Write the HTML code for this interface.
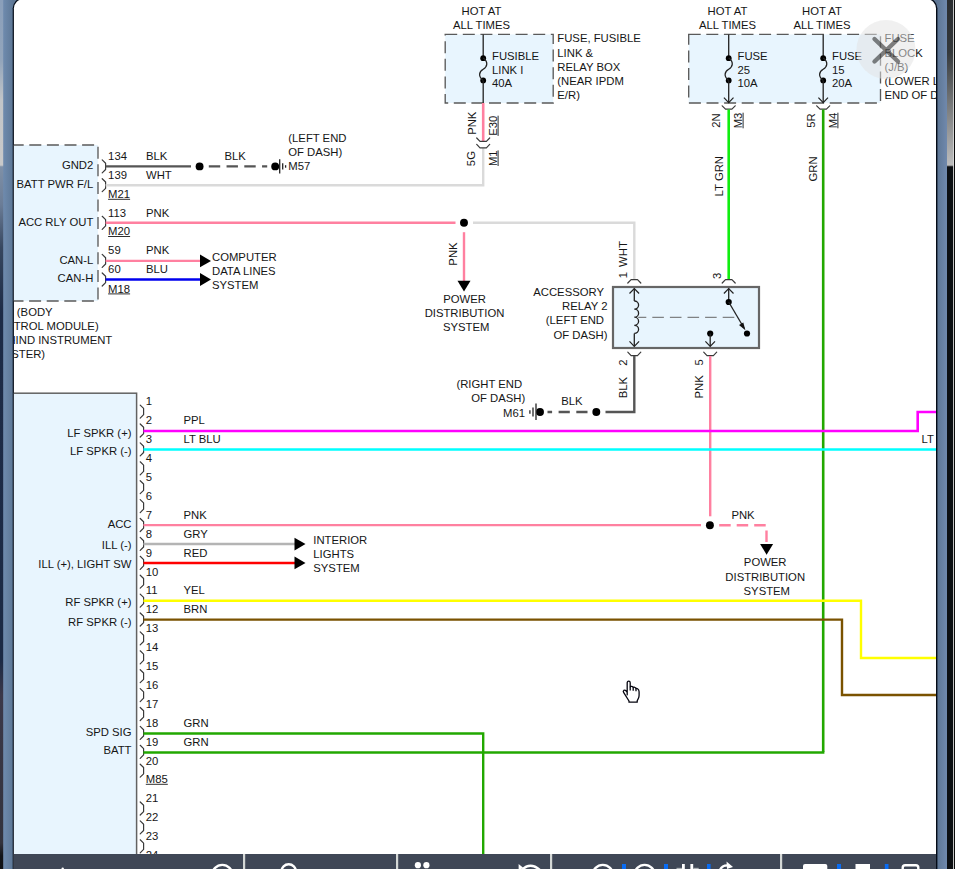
<!DOCTYPE html>
<html><head><meta charset="utf-8"><title>Wiring diagram</title>
<style>
html,body{margin:0;padding:0;background:#fff;}
body{width:955px;height:869px;overflow:hidden;position:relative;font-family:"Liberation Sans",sans-serif;}
svg{position:absolute;left:0;top:0;display:block;}
svg text{font-family:"Liberation Sans",sans-serif;}
svg text.u{text-decoration:underline;text-decoration-thickness:0.9px;text-underline-offset:0.6px;}
</style></head><body>
<svg width="955" height="869" viewBox="0 0 955 869">
<defs>
<linearGradient id="lg" x1="0" x2="1" y1="0" y2="0"><stop offset="0" stop-color="#6f8bae"/><stop offset="1" stop-color="#5c7694"/></linearGradient><linearGradient id="rg" x1="0" x2="1" y1="0" y2="0"><stop offset="0" stop-color="#5b7492"/><stop offset="1" stop-color="#7089ad"/></linearGradient>
<linearGradient id="ls" x1="0" x2="0" y1="0" y2="1"><stop offset="0" stop-color="#8a9fba"/><stop offset="0.07" stop-color="#93a5bb"/><stop offset="0.115" stop-color="#c2c5c8"/><stop offset="0.19" stop-color="#c9c9c9"/><stop offset="0.192" stop-color="#7f90a7"/><stop offset="0.235" stop-color="#6b7d97"/><stop offset="0.285" stop-color="#37475f"/><stop offset="0.36" stop-color="#1d2b46"/><stop offset="0.76" stop-color="#1c2a45"/><stop offset="0.8" stop-color="#3b3849"/><stop offset="0.97" stop-color="#33333d"/><stop offset="0.985" stop-color="#121418"/><stop offset="1" stop-color="#101216"/></linearGradient>
<linearGradient id="rs" x1="0" x2="0" y1="0" y2="1"><stop offset="0" stop-color="#2a2d30"/><stop offset="0.06" stop-color="#34383b"/><stop offset="0.12" stop-color="#77797a"/><stop offset="0.19" stop-color="#bdbdbd"/><stop offset="0.192" stop-color="#0c0f12"/><stop offset="1" stop-color="#0c0f12"/></linearGradient>
<clipPath id="cp"><rect x="13.9" y="-0.7" width="922.1" height="900" rx="9" ry="9"/></clipPath>
</defs>
<!-- backdrop strips -->
<rect x="0" y="0" width="955" height="869" fill="#5f7896"/>
<rect x="3" y="0" width="11" height="869" fill="url(#lg)"/>
<rect x="0" y="0" width="3.2" height="869" fill="url(#ls)"/>
<rect x="936" y="0" width="11.2" height="869" fill="url(#rg)"/>
<rect x="947" y="0" width="8" height="869" fill="url(#rs)"/>
<rect x="953" y="0" width="0.9" height="869" fill="#f2f2f2"/>
<rect x="953.9" y="0" width="1.1" height="869" fill="#0a0a0a"/>
<!-- modal sheet -->
<rect x="12.7" y="-1.8" width="924.7" height="900" rx="10" ry="10" fill="#030a16"/>
<rect x="13.9" y="-0.7" width="922.1" height="900" rx="9" ry="9" fill="#fff"/>
<g clip-path="url(#cp)">
<rect x="0" y="145" width="98" height="156" fill="#e8f5fe"/>
<path d="M0,145 H98 V301 H0" stroke="#5a5a5a" stroke-width="1.35" fill="none" stroke-dasharray="12 5.6" stroke-dashoffset="5.9"/>
<text x="93.3" y="169.1" text-anchor="end" fill="#161616" font-size="11.3">GND2</text>
<text x="93.3" y="188.1" text-anchor="end" fill="#161616" font-size="11.3">BATT PWR F/L</text>
<text x="93.3" y="225.9" text-anchor="end" fill="#161616" font-size="11.3">ACC RLY OUT</text>
<text x="93.3" y="263.6" text-anchor="end" fill="#161616" font-size="11.3">CAN-L</text>
<text x="93.3" y="282.3" text-anchor="end" fill="#161616" font-size="11.3">CAN-H</text>
<path d="M102.2,159.9 L105.60000000000001,163.20000000000002 V169.5 L102.2,172.9" stroke="#3a3a3a" stroke-width="1.2" fill="none" stroke-linejoin="round" stroke-linecap="round"/>
<path d="M102.2,178.7 L105.60000000000001,182.0 V188.29999999999998 L102.2,191.7" stroke="#3a3a3a" stroke-width="1.2" fill="none" stroke-linejoin="round" stroke-linecap="round"/>
<path d="M102.2,216.3 L105.60000000000001,219.60000000000002 V225.9 L102.2,229.3" stroke="#3a3a3a" stroke-width="1.2" fill="none" stroke-linejoin="round" stroke-linecap="round"/>
<path d="M102.2,254.39999999999998 L105.60000000000001,257.7 V264.0 L102.2,267.4" stroke="#3a3a3a" stroke-width="1.2" fill="none" stroke-linejoin="round" stroke-linecap="round"/>
<path d="M102.2,273.0 L105.60000000000001,276.3 V282.6 L102.2,286.0" stroke="#3a3a3a" stroke-width="1.2" fill="none" stroke-linejoin="round" stroke-linecap="round"/>
<text x="108.1" y="160.4" text-anchor="start" fill="#161616" font-size="11.3">134</text>
<text x="146" y="160.4" text-anchor="start" fill="#161616" font-size="11.3">BLK</text>
<text x="224.5" y="160.4" text-anchor="start" fill="#161616" font-size="11.3">BLK</text>
<text x="108.1" y="179.1" text-anchor="start" fill="#161616" font-size="11.3">139</text>
<text x="146" y="179.1" text-anchor="start" fill="#161616" font-size="11.3">WHT</text>
<text x="108.1" y="198.1" text-anchor="start" fill="#161616" font-size="11.3">M21</text>
<line x1="108.1" y1="199.3" x2="130.1" y2="199.3" stroke="#161616" stroke-width="0.9"/>
<text x="108.1" y="216.9" text-anchor="start" fill="#161616" font-size="11.3">113</text>
<text x="146" y="216.9" text-anchor="start" fill="#161616" font-size="11.3">PNK</text>
<text x="108.1" y="235.3" text-anchor="start" fill="#161616" font-size="11.3">M20</text>
<line x1="108.1" y1="236.5" x2="130.1" y2="236.5" stroke="#161616" stroke-width="0.9"/>
<text x="108.1" y="254.1" text-anchor="start" fill="#161616" font-size="11.3">59</text>
<text x="146" y="254.1" text-anchor="start" fill="#161616" font-size="11.3">PNK</text>
<text x="108.1" y="273.1" text-anchor="start" fill="#161616" font-size="11.3">60</text>
<text x="146" y="273.1" text-anchor="start" fill="#161616" font-size="11.3">BLU</text>
<text x="108.1" y="292.7" text-anchor="start" fill="#161616" font-size="11.3">M18</text>
<line x1="108.1" y1="293.9" x2="130.1" y2="293.9" stroke="#161616" stroke-width="0.9"/>
<line x1="105.6" y1="166.4" x2="191" y2="166.4" stroke="#555555" stroke-width="2.4" stroke-linecap="butt"/>
<circle cx="199.6" cy="166.4" r="3.95" fill="#000"/>
<line x1="208.8" y1="166.4" x2="267.2" y2="166.4" stroke="#555555" stroke-width="2.4" stroke-dasharray="11.4 6.35" stroke-linecap="butt"/>
<circle cx="275.2" cy="166.4" r="3.95" fill="#000"/>
<line x1="279.7" y1="159.3" x2="279.7" y2="173.6" stroke="#222" stroke-width="1.3" stroke-linecap="butt"/>
<line x1="282.7" y1="163.3" x2="282.7" y2="169.5" stroke="#222" stroke-width="1.3" stroke-linecap="butt"/>
<line x1="285.6" y1="165.2" x2="285.6" y2="167.7" stroke="#222" stroke-width="1.3" stroke-linecap="butt"/>
<text x="288.3" y="142.1" text-anchor="start" fill="#161616" font-size="11.3">(LEFT END</text>
<text x="288.3" y="155.8" text-anchor="start" fill="#161616" font-size="11.3">OF DASH)</text>
<text x="288.3" y="170.3" text-anchor="start" fill="#161616" font-size="11.3">M57</text>
<path d="M105.6,185.2 H483.2 V148" stroke="#dadada" stroke-width="2.4" fill="none" stroke-linejoin="miter" stroke-linecap="butt"/>
<line x1="105.6" y1="222.8" x2="455.5" y2="222.8" stroke="#ff80a0" stroke-width="2.4" stroke-linecap="butt"/>
<circle cx="464" cy="222.8" r="3.95" fill="#000"/>
<path d="M473,222.8 H634.3 V279.5" stroke="#dadada" stroke-width="2.4" fill="none" stroke-linejoin="miter" stroke-linecap="butt"/>
<line x1="464" y1="232.2" x2="464" y2="281.5" stroke="#ff80a0" stroke-width="2.4" stroke-linecap="butt"/>
<path d="M457.5,280.7 L464,291.5 L470.5,280.7 Z" fill="#000"/>
<text x="452.5" y="258.1" text-anchor="middle" transform="rotate(-90 452.5 254)" fill="#161616" font-size="11.3">PNK</text>
<text x="464.5" y="302.6" text-anchor="middle" fill="#161616" font-size="11.3">POWER</text>
<text x="464.5" y="316.9" text-anchor="middle" fill="#161616" font-size="11.3">DISTRIBUTION</text>
<text x="466.2" y="331.1" text-anchor="middle" fill="#161616" font-size="11.3">SYSTEM</text>
<line x1="105.6" y1="260.9" x2="200.5" y2="260.9" stroke="#ff80a0" stroke-width="2.4" stroke-linecap="butt"/>
<path d="M200,254.49999999999997 L211,260.9 L200,267.29999999999995 Z" fill="#000"/>
<line x1="105.6" y1="279.5" x2="200.5" y2="279.5" stroke="#0000ee" stroke-width="2.4" stroke-linecap="butt"/>
<path d="M200,273.1 L211,279.5 L200,285.9 Z" fill="#000"/>
<text x="212" y="261.1" text-anchor="start" fill="#161616" font-size="11.3">COMPUTER</text>
<text x="212" y="275.1" text-anchor="start" fill="#161616" font-size="11.3">DATA LINES</text>
<text x="212" y="289.1" text-anchor="start" fill="#161616" font-size="11.3">SYSTEM</text>
<text x="-11.4" y="315.6" text-anchor="start" fill="#161616" font-size="11.3">BCM (BODY</text>
<text x="-11.4" y="329.7" text-anchor="start" fill="#161616" font-size="11.3">CONTROL MODULE)</text>
<text x="-11.4" y="343.8" text-anchor="start" fill="#161616" font-size="11.3">(BEHIND INSTRUMENT</text>
<text x="-11.4" y="357.9" text-anchor="start" fill="#161616" font-size="11.3">CLUSTER)</text>
<rect x="445.2" y="34.4" width="108" height="68.6" fill="#e8f5fe"/>
<rect x="445.2" y="34.4" width="108" height="68.6" fill="none" stroke="#5a5a5a" stroke-width="1.35" stroke-dasharray="12 5.6"/>
<text x="481.5" y="15.1" text-anchor="middle" fill="#161616" font-size="11.3">HOT AT</text>
<text x="481.5" y="29.1" text-anchor="middle" fill="#161616" font-size="11.3">ALL TIMES</text>
<line x1="483.2" y1="34.4" x2="483.2" y2="58" stroke="#222" stroke-width="1.3" stroke-linecap="butt"/>
<circle cx="483.2" cy="58.2" r="2.9" fill="#000"/>
<circle cx="483.2" cy="80.4" r="2.9" fill="#000"/>
<path d="M483.2,58 C488.7,62 487.2,67 483.2,69.3 C479.2,71.6 477.7,76 483.2,80.4" stroke="#222" stroke-width="1.3" fill="none" stroke-linejoin="miter" stroke-linecap="butt"/>
<line x1="483.2" y1="80.4" x2="483.2" y2="103" stroke="#222" stroke-width="1.3" stroke-linecap="butt"/>
<text x="492" y="60.1" text-anchor="start" fill="#161616" font-size="11.3">FUSIBLE</text>
<text x="492" y="74.3" text-anchor="start" fill="#161616" font-size="11.3">LINK I</text>
<text x="492" y="86.9" text-anchor="start" fill="#161616" font-size="11.3">40A</text>
<text x="557.3" y="42.3" text-anchor="start" fill="#161616" font-size="11.3">FUSE, FUSIBLE</text>
<text x="557.3" y="56.7" text-anchor="start" fill="#161616" font-size="11.3">LINK &amp;</text>
<text x="557.3" y="71.1" text-anchor="start" fill="#161616" font-size="11.3">RELAY BOX</text>
<text x="557.3" y="85.3" text-anchor="start" fill="#161616" font-size="11.3">(NEAR IPDM</text>
<text x="557.3" y="99.3" text-anchor="start" fill="#161616" font-size="11.3">E/R)</text>
<line x1="483.2" y1="103" x2="483.2" y2="141" stroke="#ff80a0" stroke-width="2.6" stroke-linecap="butt"/>
<path d="M476.7,138.0 L480.0,141.4 H486.4 L489.7,138.0" stroke="#3a3a3a" stroke-width="1.2" fill="none" stroke-linejoin="round" stroke-linecap="round"/>
<path d="M476.7,144.4 L480.0,147.8 H486.4 L489.7,144.4" stroke="#3a3a3a" stroke-width="1.2" fill="none" stroke-linejoin="round" stroke-linecap="round"/>
<text x="471.6" y="127.3" text-anchor="middle" transform="rotate(-90 471.6 123.2)" fill="#161616" font-size="11.3">PNK</text>
<text x="492.8" y="129.9" text-anchor="middle" transform="rotate(-90 492.8 125.8)" fill="#161616" font-size="11.3">E30</text>
<line x1="482.7" y1="131.1" x2="502.9" y2="131.1" transform="rotate(-90 492.8 125.8)" stroke="#161616" stroke-width="0.9"/>
<text x="471.3" y="162.7" text-anchor="middle" transform="rotate(-90 471.3 158.6)" fill="#161616" font-size="11.3">5G</text>
<text x="492.8" y="162.3" text-anchor="middle" transform="rotate(-90 492.8 158.2)" fill="#161616" font-size="11.3">M1</text>
<line x1="485.0" y1="163.5" x2="500.6" y2="163.5" transform="rotate(-90 492.8 158.2)" stroke="#161616" stroke-width="0.9"/>
<rect x="688.7" y="34.4" width="191.8" height="68.6" fill="#e8f5fe"/>
<rect x="688.7" y="34.4" width="191.8" height="68.6" fill="none" stroke="#5a5a5a" stroke-width="1.35" stroke-dasharray="12 5.6"/>
<text x="727.5" y="15.1" text-anchor="middle" fill="#161616" font-size="11.3">HOT AT</text>
<text x="727.5" y="29.1" text-anchor="middle" fill="#161616" font-size="11.3">ALL TIMES</text>
<text x="822" y="15.1" text-anchor="middle" fill="#161616" font-size="11.3">HOT AT</text>
<text x="822" y="29.1" text-anchor="middle" fill="#161616" font-size="11.3">ALL TIMES</text>
<line x1="728.7" y1="34.4" x2="728.7" y2="58" stroke="#222" stroke-width="1.3" stroke-linecap="butt"/>
<circle cx="728.7" cy="58.2" r="2.9" fill="#000"/>
<circle cx="728.7" cy="80.4" r="2.9" fill="#000"/>
<path d="M728.7,58 C734.2,62 732.7,67 728.7,69.3 C724.7,71.6 723.2,76 728.7,80.4" stroke="#222" stroke-width="1.3" fill="none" stroke-linejoin="miter" stroke-linecap="butt"/>
<line x1="728.7" y1="80.4" x2="728.7" y2="103" stroke="#222" stroke-width="1.3" stroke-linecap="butt"/>
<line x1="823.2" y1="34.4" x2="823.2" y2="58" stroke="#222" stroke-width="1.3" stroke-linecap="butt"/>
<circle cx="823.2" cy="58.2" r="2.9" fill="#000"/>
<circle cx="823.2" cy="80.4" r="2.9" fill="#000"/>
<path d="M823.2,58 C828.7,62 827.2,67 823.2,69.3 C819.2,71.6 817.7,76 823.2,80.4" stroke="#222" stroke-width="1.3" fill="none" stroke-linejoin="miter" stroke-linecap="butt"/>
<line x1="823.2" y1="80.4" x2="823.2" y2="103" stroke="#222" stroke-width="1.3" stroke-linecap="butt"/>
<path d="M723.9000000000001,97.6 L728.7,102.6 L733.5,97.6" stroke="#222" stroke-width="1.2" fill="none" stroke-linejoin="miter" stroke-linecap="butt"/>
<path d="M818.4000000000001,97.6 L823.2,102.6 L828.0,97.6" stroke="#222" stroke-width="1.2" fill="none" stroke-linejoin="miter" stroke-linecap="butt"/>
<text x="737.5" y="60.1" text-anchor="start" fill="#161616" font-size="11.3">FUSE</text>
<text x="737.5" y="74.3" text-anchor="start" fill="#161616" font-size="11.3">25</text>
<text x="737.5" y="86.9" text-anchor="start" fill="#161616" font-size="11.3">10A</text>
<text x="832" y="60.1" text-anchor="start" fill="#161616" font-size="11.3">FUSE</text>
<text x="832" y="74.3" text-anchor="start" fill="#161616" font-size="11.3">15</text>
<text x="832" y="86.9" text-anchor="start" fill="#161616" font-size="11.3">20A</text>
<text x="884.5" y="42.3" text-anchor="start" fill="#161616" font-size="11.3">FUSE</text>
<text x="884.5" y="56.7" text-anchor="start" fill="#161616" font-size="11.3">BLOCK</text>
<text x="884.5" y="71.1" text-anchor="start" fill="#161616" font-size="11.3">(J/B)</text>
<text x="884.5" y="85.3" text-anchor="start" fill="#161616" font-size="11.3">(LOWER LEFT</text>
<text x="884.5" y="99.3" text-anchor="start" fill="#161616" font-size="11.3">END OF DASH)</text>
<path d="M722.2,105.8 L725.5,109.2 H731.9000000000001 L735.2,105.8" stroke="#3a3a3a" stroke-width="1.2" fill="none" stroke-linejoin="round" stroke-linecap="round"/>
<path d="M816.7,105.8 L820.0,109.2 H826.4000000000001 L829.7,105.8" stroke="#3a3a3a" stroke-width="1.2" fill="none" stroke-linejoin="round" stroke-linecap="round"/>
<line x1="728.7" y1="109.5" x2="728.7" y2="279.5" stroke="#10ee10" stroke-width="2.6" stroke-linecap="butt"/>
<path d="M823.2,109.5 V752" stroke="#22a800" stroke-width="2.6" fill="none" stroke-linejoin="miter" stroke-linecap="butt"/>
<text x="715.6" y="124.6" text-anchor="middle" transform="rotate(-90 715.6 120.5)" fill="#161616" font-size="11.3">2N</text>
<text x="737.8" y="124.6" text-anchor="middle" transform="rotate(-90 737.8 120.5)" fill="#161616" font-size="11.3">M3</text>
<line x1="730.0" y1="125.8" x2="745.6" y2="125.8" transform="rotate(-90 737.8 120.5)" stroke="#161616" stroke-width="0.9"/>
<text x="811" y="124.6" text-anchor="middle" transform="rotate(-90 811 120.5)" fill="#161616" font-size="11.3">5R</text>
<text x="832.6" y="124.6" text-anchor="middle" transform="rotate(-90 832.6 120.5)" fill="#161616" font-size="11.3">M4</text>
<line x1="824.8" y1="125.8" x2="840.4" y2="125.8" transform="rotate(-90 832.6 120.5)" stroke="#161616" stroke-width="0.9"/>
<text x="718.5" y="180.3" text-anchor="middle" transform="rotate(-90 718.5 176.2)" fill="#161616" font-size="11.3">LT GRN</text>
<text x="813.3" y="173.1" text-anchor="middle" transform="rotate(-90 813.3 169)" fill="#161616" font-size="11.3">GRN</text>
<rect x="613" y="287" width="146" height="61" fill="#e8f5fe" stroke="#666" stroke-width="2.2"/>
<path d="M627.8,283.0 L631.0999999999999,279.6 H637.5 L640.8,283.0" stroke="#3a3a3a" stroke-width="1.2" fill="none" stroke-linejoin="round" stroke-linecap="round"/>
<path d="M722.2,283.0 L725.5,279.6 H731.9000000000001 L735.2,283.0" stroke="#3a3a3a" stroke-width="1.2" fill="none" stroke-linejoin="round" stroke-linecap="round"/>
<path d="M627.8,352.20000000000005 L631.0999999999999,355.6 H637.5 L640.8,352.20000000000005" stroke="#3a3a3a" stroke-width="1.2" fill="none" stroke-linejoin="round" stroke-linecap="round"/>
<path d="M703.7,352.20000000000005 L707.0,355.6 H713.4000000000001 L716.7,352.20000000000005" stroke="#3a3a3a" stroke-width="1.2" fill="none" stroke-linejoin="round" stroke-linecap="round"/>
<path d="M629.5,293.5 L634.3,288.5 L639.0999999999999,293.5" stroke="#222" stroke-width="1.2" fill="none" stroke-linejoin="miter" stroke-linecap="butt"/>
<path d="M629.5,341.3 L634.3,346.3 L639.0999999999999,341.3" stroke="#222" stroke-width="1.2" fill="none" stroke-linejoin="miter" stroke-linecap="butt"/>
<line x1="634.3" y1="288.5" x2="634.3" y2="301" stroke="#222" stroke-width="1.3" stroke-linecap="butt"/>
<path d="M634.3,301 a4.3,4.05 0 0 1 0,8.1 a4.3,4.05 0 0 1 0,8.1 a4.3,4.05 0 0 1 0,8.1 a4.3,4.05 0 0 1 0,8.1" stroke="#222" stroke-width="1.3" fill="none" stroke-linejoin="miter" stroke-linecap="butt"/>
<line x1="634.3" y1="333.4" x2="634.3" y2="346.3" stroke="#222" stroke-width="1.3" stroke-linecap="butt"/>
<line x1="638.2" y1="317.3" x2="735" y2="317.3" stroke="#666" stroke-width="1" stroke-dasharray="11.6 6" stroke-dashoffset="3.5"/>
<path d="M723.9000000000001,293.5 L728.7,288.5 L733.5,293.5" stroke="#222" stroke-width="1.2" fill="none" stroke-linejoin="miter" stroke-linecap="butt"/>
<line x1="728.7" y1="288.5" x2="728.7" y2="302" stroke="#222" stroke-width="1.3" stroke-linecap="butt"/>
<circle cx="728.7" cy="302" r="3.1" fill="#000"/>
<circle cx="747" cy="333.5" r="3.1" fill="#000"/>
<circle cx="710.2" cy="333.5" r="3.1" fill="#000"/>
<line x1="728.7" y1="302" x2="744" y2="328" stroke="#222" stroke-width="1.3" stroke-linecap="butt"/>
<path d="M745.4,330.2 L739,325 L743.3,322.4 Z" fill="#111"/>
<line x1="710.2" y1="333.5" x2="710.2" y2="346.3" stroke="#222" stroke-width="1.3" stroke-linecap="butt"/>
<path d="M705.4000000000001,341.3 L710.2,346.3 L715.0,341.3" stroke="#222" stroke-width="1.2" fill="none" stroke-linejoin="miter" stroke-linecap="butt"/>
<text x="604" y="295.6" text-anchor="end" fill="#161616" font-size="11.3">ACCESSORY</text>
<text x="607.5" y="309.9" text-anchor="end" fill="#161616" font-size="11.3">RELAY 2</text>
<text x="604" y="323.7" text-anchor="end" fill="#161616" font-size="11.3">(LEFT END</text>
<text x="607.5" y="338.5" text-anchor="end" fill="#161616" font-size="11.3">OF DASH)</text>
<text x="623.3" y="279.3" text-anchor="middle" transform="rotate(-90 623.3 275.2)" fill="#161616" font-size="11.3">1</text>
<text x="623.3" y="258.1" text-anchor="middle" transform="rotate(-90 623.3 254)" fill="#161616" font-size="11.3">WHT</text>
<text x="717.3" y="279.9" text-anchor="middle" transform="rotate(-90 717.3 275.8)" fill="#161616" font-size="11.3">3</text>
<text x="623.4" y="366.7" text-anchor="middle" transform="rotate(-90 623.4 362.6)" fill="#161616" font-size="11.3">2</text>
<text x="623" y="391.7" text-anchor="middle" transform="rotate(-90 623 387.6)" fill="#161616" font-size="11.3">BLK</text>
<text x="698.5" y="366.5" text-anchor="middle" transform="rotate(-90 698.5 362.4)" fill="#161616" font-size="11.3">5</text>
<text x="698.5" y="390.9" text-anchor="middle" transform="rotate(-90 698.5 386.8)" fill="#161616" font-size="11.3">PNK</text>
<path d="M634.3,356 V412 H605.5" stroke="#555555" stroke-width="2.4" fill="none" stroke-linejoin="miter" stroke-linecap="butt"/>
<circle cx="596.3" cy="412" r="3.95" fill="#000"/>
<path d="M587.5,412 H547.5" stroke="#555555" stroke-width="2.4" fill="none" stroke-dasharray="11.2 6.5"/>
<circle cx="540" cy="412" r="3.95" fill="#000"/>
<line x1="536" y1="403.6" x2="536" y2="420" stroke="#222" stroke-width="1.3" stroke-linecap="butt"/>
<line x1="533" y1="407.6" x2="533" y2="416.4" stroke="#222" stroke-width="1.3" stroke-linecap="butt"/>
<line x1="529.9" y1="410.2" x2="529.9" y2="413.8" stroke="#222" stroke-width="1.3" stroke-linecap="butt"/>
<text x="561.2" y="405.3" text-anchor="start" fill="#161616" font-size="11.3">BLK</text>
<text x="522.1" y="388.3" text-anchor="end" fill="#161616" font-size="11.3">(RIGHT END</text>
<text x="525.2" y="402.3" text-anchor="end" fill="#161616" font-size="11.3">OF DASH)</text>
<text x="525" y="417.3" text-anchor="end" fill="#161616" font-size="11.3">M61</text>
<line x1="710.2" y1="356" x2="710.2" y2="516.3" stroke="#ff80a0" stroke-width="2.4" stroke-linecap="butt"/>
<circle cx="709.9" cy="525.2" r="3.95" fill="#000"/>
<rect x="0" y="393.2" width="136.6" height="480" fill="#e8f5fe" stroke="#626262" stroke-width="1.5"/>
<text x="145.8" y="405.1" text-anchor="start" fill="#161616" font-size="11.3">1</text>
<path d="M140.2,405.1 L143.6,408.40000000000003 V414.70000000000005 L140.2,418.1" stroke="#3a3a3a" stroke-width="1.2" fill="none" stroke-linejoin="round" stroke-linecap="round"/>
<text x="145.8" y="424.0" text-anchor="start" fill="#161616" font-size="11.3">2</text>
<path d="M140.2,424.0 L143.6,427.3 V433.6 L140.2,437.0" stroke="#3a3a3a" stroke-width="1.2" fill="none" stroke-linejoin="round" stroke-linecap="round"/>
<text x="145.8" y="442.9" text-anchor="start" fill="#161616" font-size="11.3">3</text>
<path d="M140.2,442.90000000000003 L143.6,446.20000000000005 V452.50000000000006 L140.2,455.90000000000003" stroke="#3a3a3a" stroke-width="1.2" fill="none" stroke-linejoin="round" stroke-linecap="round"/>
<text x="145.8" y="461.8" text-anchor="start" fill="#161616" font-size="11.3">4</text>
<path d="M140.2,461.8 L143.6,465.1 V471.40000000000003 L140.2,474.8" stroke="#3a3a3a" stroke-width="1.2" fill="none" stroke-linejoin="round" stroke-linecap="round"/>
<text x="145.8" y="480.7" text-anchor="start" fill="#161616" font-size="11.3">5</text>
<path d="M140.2,480.70000000000005 L143.6,484.00000000000006 V490.30000000000007 L140.2,493.70000000000005" stroke="#3a3a3a" stroke-width="1.2" fill="none" stroke-linejoin="round" stroke-linecap="round"/>
<text x="145.8" y="499.6" text-anchor="start" fill="#161616" font-size="11.3">6</text>
<path d="M140.2,499.6 L143.6,502.90000000000003 V509.20000000000005 L140.2,512.6" stroke="#3a3a3a" stroke-width="1.2" fill="none" stroke-linejoin="round" stroke-linecap="round"/>
<text x="145.8" y="518.5" text-anchor="start" fill="#161616" font-size="11.3">7</text>
<path d="M140.2,518.5 L143.6,521.8 V528.1 L140.2,531.5" stroke="#3a3a3a" stroke-width="1.2" fill="none" stroke-linejoin="round" stroke-linecap="round"/>
<text x="145.8" y="538.2" text-anchor="start" fill="#161616" font-size="11.3">8</text>
<path d="M140.2,537.4 L143.6,540.6999999999999 V547.0 L140.2,550.4" stroke="#3a3a3a" stroke-width="1.2" fill="none" stroke-linejoin="round" stroke-linecap="round"/>
<text x="145.8" y="557.1" text-anchor="start" fill="#161616" font-size="11.3">9</text>
<path d="M140.2,556.3000000000001 L143.6,559.6 V565.9000000000001 L140.2,569.3000000000001" stroke="#3a3a3a" stroke-width="1.2" fill="none" stroke-linejoin="round" stroke-linecap="round"/>
<text x="145.8" y="576.4" text-anchor="start" fill="#161616" font-size="11.3">10</text>
<path d="M140.2,575.2 L143.6,578.5 V584.8000000000001 L140.2,588.2" stroke="#3a3a3a" stroke-width="1.2" fill="none" stroke-linejoin="round" stroke-linecap="round"/>
<text x="145.8" y="594.1" text-anchor="start" fill="#161616" font-size="11.3">11</text>
<path d="M140.2,594.1 L143.6,597.4 V603.7 L140.2,607.1" stroke="#3a3a3a" stroke-width="1.2" fill="none" stroke-linejoin="round" stroke-linecap="round"/>
<text x="145.8" y="613.0" text-anchor="start" fill="#161616" font-size="11.3">12</text>
<path d="M140.2,613.0 L143.6,616.3 V622.6 L140.2,626.0" stroke="#3a3a3a" stroke-width="1.2" fill="none" stroke-linejoin="round" stroke-linecap="round"/>
<text x="145.8" y="631.9" text-anchor="start" fill="#161616" font-size="11.3">13</text>
<path d="M140.2,631.9 L143.6,635.1999999999999 V641.5 L140.2,644.9" stroke="#3a3a3a" stroke-width="1.2" fill="none" stroke-linejoin="round" stroke-linecap="round"/>
<text x="145.8" y="650.8" text-anchor="start" fill="#161616" font-size="11.3">14</text>
<path d="M140.2,650.8000000000001 L143.6,654.1 V660.4000000000001 L140.2,663.8000000000001" stroke="#3a3a3a" stroke-width="1.2" fill="none" stroke-linejoin="round" stroke-linecap="round"/>
<text x="145.8" y="669.7" text-anchor="start" fill="#161616" font-size="11.3">15</text>
<path d="M140.2,669.6999999999999 L143.6,672.9999999999999 V679.3 L140.2,682.6999999999999" stroke="#3a3a3a" stroke-width="1.2" fill="none" stroke-linejoin="round" stroke-linecap="round"/>
<text x="145.8" y="688.6" text-anchor="start" fill="#161616" font-size="11.3">16</text>
<path d="M140.2,688.6 L143.6,691.9 V698.2 L140.2,701.6" stroke="#3a3a3a" stroke-width="1.2" fill="none" stroke-linejoin="round" stroke-linecap="round"/>
<text x="145.8" y="707.5" text-anchor="start" fill="#161616" font-size="11.3">17</text>
<path d="M140.2,707.5 L143.6,710.8 V717.1 L140.2,720.5" stroke="#3a3a3a" stroke-width="1.2" fill="none" stroke-linejoin="round" stroke-linecap="round"/>
<text x="145.8" y="727.2" text-anchor="start" fill="#161616" font-size="11.3">18</text>
<path d="M140.2,726.4 L143.6,729.6999999999999 V736.0 L140.2,739.4" stroke="#3a3a3a" stroke-width="1.2" fill="none" stroke-linejoin="round" stroke-linecap="round"/>
<text x="145.8" y="746.1" text-anchor="start" fill="#161616" font-size="11.3">19</text>
<path d="M140.2,745.3000000000001 L143.6,748.6 V754.9000000000001 L140.2,758.3000000000001" stroke="#3a3a3a" stroke-width="1.2" fill="none" stroke-linejoin="round" stroke-linecap="round"/>
<text x="145.8" y="765.1" text-anchor="start" fill="#161616" font-size="11.3">20</text>
<path d="M140.2,764.1999999999999 L143.6,767.4999999999999 V773.8 L140.2,777.1999999999999" stroke="#3a3a3a" stroke-width="1.2" fill="none" stroke-linejoin="round" stroke-linecap="round"/>
<text x="145.8" y="783.1" text-anchor="start" fill="#161616" font-size="11.3">M85</text>
<line x1="145.8" y1="784.3" x2="167.8" y2="784.3" stroke="#161616" stroke-width="0.9"/>
<text x="145.8" y="802.0" text-anchor="start" fill="#161616" font-size="11.3">21</text>
<path d="M140.2,802.0 L143.6,805.3 V811.6 L140.2,815.0" stroke="#3a3a3a" stroke-width="1.2" fill="none" stroke-linejoin="round" stroke-linecap="round"/>
<text x="145.8" y="820.9" text-anchor="start" fill="#161616" font-size="11.3">22</text>
<path d="M140.2,820.9 L143.6,824.1999999999999 V830.5 L140.2,833.9" stroke="#3a3a3a" stroke-width="1.2" fill="none" stroke-linejoin="round" stroke-linecap="round"/>
<text x="145.8" y="839.8" text-anchor="start" fill="#161616" font-size="11.3">23</text>
<path d="M140.2,839.8000000000001 L143.6,843.1 V849.4000000000001 L140.2,852.8000000000001" stroke="#3a3a3a" stroke-width="1.2" fill="none" stroke-linejoin="round" stroke-linecap="round"/>
<text x="145.8" y="858.7" text-anchor="start" fill="#161616" font-size="11.3">24</text>
<path d="M140.2,858.6999999999999 L143.6,861.9999999999999 V868.3 L140.2,871.6999999999999" stroke="#3a3a3a" stroke-width="1.2" fill="none" stroke-linejoin="round" stroke-linecap="round"/>
<text x="131.5" y="436.5" text-anchor="end" fill="#161616" font-size="11.3">LF SPKR (+)</text>
<text x="131.5" y="455.4" text-anchor="end" fill="#161616" font-size="11.3">LF SPKR (-)</text>
<text x="131.5" y="528.3" text-anchor="end" fill="#161616" font-size="11.3">ACC</text>
<text x="131.5" y="548.9" text-anchor="end" fill="#161616" font-size="11.3">ILL (-)</text>
<text x="131.5" y="568.4" text-anchor="end" fill="#161616" font-size="11.3">ILL (+), LIGHT SW</text>
<text x="131.5" y="606.1" text-anchor="end" fill="#161616" font-size="11.3">RF SPKR (+)</text>
<text x="131.5" y="625.7" text-anchor="end" fill="#161616" font-size="11.3">RF SPKR (-)</text>
<text x="131.5" y="735.9" text-anchor="end" fill="#161616" font-size="11.3">SPD SIG</text>
<text x="131.5" y="754.4" text-anchor="end" fill="#161616" font-size="11.3">BATT</text>
<text x="183.5" y="424.0" text-anchor="start" fill="#161616" font-size="11.3">PPL</text>
<text x="183.5" y="442.9" text-anchor="start" fill="#161616" font-size="11.3">LT BLU</text>
<text x="183.5" y="518.5" text-anchor="start" fill="#161616" font-size="11.3">PNK</text>
<text x="183.5" y="538.2" text-anchor="start" fill="#161616" font-size="11.3">GRY</text>
<text x="183.5" y="557.1" text-anchor="start" fill="#161616" font-size="11.3">RED</text>
<text x="183.5" y="594.1" text-anchor="start" fill="#161616" font-size="11.3">YEL</text>
<text x="183.5" y="613.0" text-anchor="start" fill="#161616" font-size="11.3">BRN</text>
<text x="183.5" y="727.2" text-anchor="start" fill="#161616" font-size="11.3">GRN</text>
<text x="183.5" y="746.1" text-anchor="start" fill="#161616" font-size="11.3">GRN</text>
<path d="M143.4,431.04999999999995 H917.7 V412 H940" stroke="#ff00ff" stroke-width="2.6" fill="none" stroke-linejoin="miter" stroke-linecap="butt"/>
<path d="M143.4,449.55 H940" stroke="#00ffff" stroke-width="2.6" fill="none" stroke-linejoin="miter" stroke-linecap="butt"/>
<text x="921.5" y="442.7" text-anchor="start" fill="#161616" font-size="11.3">LT BLU</text>
<path d="M143.4,525.15 H701" stroke="#ff80a0" stroke-width="2.4" fill="none" stroke-linejoin="miter" stroke-linecap="butt"/>
<path d="M719.2,525.2 H766.5 V545" stroke="#ff80a0" stroke-width="2.4" fill="none" stroke-dasharray="11.5 6" stroke-linejoin="miter" stroke-linecap="butt"/>
<path d="M760.1,543.9000000000001 L766.6,554.7 L773.1,543.9000000000001 Z" fill="#000"/>
<text x="743" y="519.3" text-anchor="middle" fill="#161616" font-size="11.3">PNK</text>
<text x="765.2" y="566.3" text-anchor="middle" fill="#161616" font-size="11.3">POWER</text>
<text x="765.2" y="580.9" text-anchor="middle" fill="#161616" font-size="11.3">DISTRIBUTION</text>
<text x="766.8" y="594.9" text-anchor="middle" fill="#161616" font-size="11.3">SYSTEM</text>
<line x1="143.4" y1="544.05" x2="295.5" y2="544.05" stroke="#b4b4b4" stroke-width="2.4" stroke-linecap="butt"/>
<path d="M294.5,537.65 L305.5,544.05 L294.5,550.4499999999999 Z" fill="#000"/>
<line x1="143.4" y1="562.95" x2="295.5" y2="562.95" stroke="#ff0000" stroke-width="2.4" stroke-linecap="butt"/>
<path d="M294.5,556.5500000000001 L305.5,562.95 L294.5,569.35 Z" fill="#000"/>
<text x="313.3" y="544.1" text-anchor="start" fill="#161616" font-size="11.3">INTERIOR</text>
<text x="313.3" y="558.1" text-anchor="start" fill="#161616" font-size="11.3">LIGHTS</text>
<text x="313.3" y="572.1" text-anchor="start" fill="#161616" font-size="11.3">SYSTEM</text>
<path d="M143.4,600.75 H861 V658 H940" stroke="#ffff00" stroke-width="2.4" fill="none" stroke-linejoin="miter" stroke-linecap="butt"/>
<path d="M143.4,619.65 H842 V695 H940" stroke="#7a5200" stroke-width="2.4" fill="none" stroke-linejoin="miter" stroke-linecap="butt"/>
<path d="M143.4,733.55 H483.2 V860" stroke="#22a800" stroke-width="2.4" fill="none" stroke-linejoin="miter" stroke-linecap="butt"/>
<path d="M143.4,752.5500000000001 H824.4" stroke="#22a800" stroke-width="2.4" fill="none" stroke-linejoin="miter" stroke-linecap="butt"/>
<!-- close button -->
<circle cx="886" cy="49.5" r="29.5" fill="#e2e2e2" fill-opacity="0.53"/>
<path d="M874.5,39 L898,61.5 M898,39 L874.5,61.5" stroke="#000" stroke-opacity="0.48" stroke-width="4.4" stroke-linecap="round"/>
<!-- toolbar -->
<rect x="13.5" y="854" width="923" height="16" fill="#3f4756"/>
<g fill="#d4d8d6"><rect x="243" y="854" width="2.2" height="16"/><rect x="396" y="854" width="2.2" height="16"/><rect x="550" y="854" width="2.2" height="16"/><rect x="780" y="854" width="2.2" height="16"/></g>
<circle cx="62.7" cy="868.6" r="1.2" fill="#fff"/>
<g fill="none" stroke="#fff" stroke-width="2.4">
<circle cx="222.3" cy="875.1" r="10.2"/><circle cx="288.7" cy="871.4" r="7.2"/>
<circle cx="602.8" cy="875.1" r="10.2"/><circle cx="644.6" cy="875.1" r="10.2"/>
<path d="M521,871 Q530,860.5 541,871"/>
<path d="M720,870 Q722,864.8 729,865.5"/>
<rect x="902.7" y="865.2" width="15.6" height="10" rx="2.5"/>
</g>
<g fill="#fff">
<circle cx="417.9" cy="865.2" r="3.1"/><circle cx="426.4" cy="865.2" r="3.1"/>
<path d="M518.6,864 L518.6,870 L523.5,868 Z"/>
<path d="M726.5,861.5 L733,867 L727,869 Z"/>
<rect x="682" y="864" width="2.8" height="6"/><rect x="690.4" y="864" width="2.8" height="6"/>
<rect x="803" y="864" width="24.3" height="8" rx="2"/>
<rect x="855.5" y="864" width="14.5" height="6"/>
</g>
<g fill="#aab0b4"><rect x="676.5" y="867.8" width="5.5" height="1.2"/><rect x="693.2" y="867.8" width="5.5" height="1.2"/></g>
<g fill="#0a6cf2"><rect x="622" y="864" width="4" height="6"/><rect x="664" y="864" width="4" height="6"/><rect x="707" y="864" width="3.6" height="6"/><rect x="837" y="864" width="4" height="6"/><rect x="884.8" y="864" width="3.7" height="6"/></g>
<!-- cursor -->
<g transform="translate(622.6,680.6)">
<path d="M4.6,14.2 L4.6,2.2 Q4.6,0.6 6.1,0.6 Q7.6,0.6 7.6,2.2 L7.6,6.2 Q8.2,5.6 9.2,5.8 Q10.3,6 10.6,6.9 Q11.3,6.4 12.2,6.7 Q13.2,7 13.4,7.9 Q14.2,7.6 15,8.2 Q16.4,9.2 16.5,11.2 L16.5,14.6 Q16.5,16.4 15.6,18.2 L14.6,20.2 L14.6,21.6 L6.4,21.6 L6.4,20.4 L1,11.8 Q0.2,10.6 1.2,9.8 Q2.3,9.1 3.4,10.2 L4.6,11.8 Z" fill="#fff" stroke="#05050f" stroke-width="1.3" stroke-linejoin="round"/>
<path d="M7.6,6.2 V10 M10.6,7 V10.2 M13.4,8 V10.6" stroke="#05050f" stroke-width="1.3" fill="none"/>
</g>
</g>
</svg>
</body></html>
